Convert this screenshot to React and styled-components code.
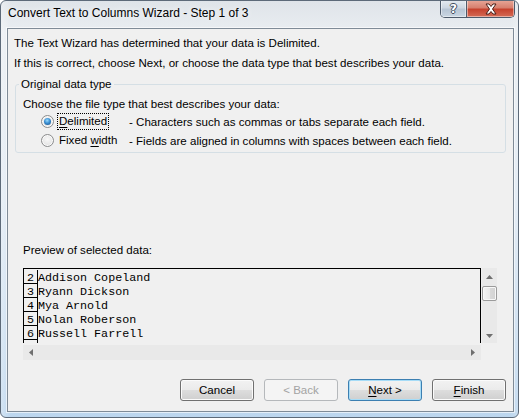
import React from 'react';
import styled, { createGlobalStyle } from 'styled-components';

const Global = createGlobalStyle`
  html, body { margin: 0; padding: 0; background: #fff; }
  body {
    width: 519px; height: 418px; overflow: hidden;
    font-family: "Liberation Sans", Arial, sans-serif;
    font-size: 11.55px; color: #000;
  }
  * { box-sizing: border-box; }
`;

const Window = styled.div`
  width: 519px;
  height: 418px;
  border: 1px solid #5d6a79;
  border-radius: 6px;
  background:
    linear-gradient(to right, rgba(255,255,255,0.35), rgba(255,255,255,0) 10px, rgba(255,255,255,0) 509px, rgba(255,255,255,0.2)),
    linear-gradient(to bottom, #dfe4e9 0px, #e9edf1 30px, #dfe9f3 200px, #bcd6ee 418px);
  display: flex;
  flex-direction: column;
  overflow: hidden;
`;

const TitleBar = styled.div`
  height: 27px;
  display: flex;
  align-items: flex-start;
  flex-shrink: 0;
`;

const Title = styled.div`
  padding-left: 7px;
  line-height: 24px;
  font-size: 12px;
  text-shadow: 0 0 6px rgba(255,255,255,0.9);
`;

const CaptionButtons = styled.div`
  margin-left: auto;
  margin-right: 3px;
  margin-top: -1px;
  display: flex;
  height: 18px;
  border: 1px solid #4d5a6a;
  border-top: none;
  border-radius: 0 0 5px 5px;
  overflow: hidden;
`;

const CaptionButton = styled.div`
  width: ${p => p.$w}px;
  height: 100%;
  display: flex;
  align-items: center;
  justify-content: center;
  background: ${p => p.$close
    ? 'linear-gradient(to bottom, #e8a899 0%, #d7806f 45%, #c6422e 55%, #d46b55 100%)'
    : 'linear-gradient(to bottom, #e5ebf1 0%, #cdd7e2 45%, #b7c5d4 55%, #cad6e2 100%)'};
  box-shadow: inset 0 0 0 1px rgba(255,255,255,0.45);
  & + & { border-left: 1px solid #4d5a6a; }
`;

const HelpGlyph = styled.span`
  font-family: "DejaVu Sans", sans-serif;
  font-weight: bold;
  font-size: 12px;
  line-height: 1;
  margin-top: 1px;
  color: #fff;
  text-shadow: 1px 0 0 #3e4d5e, -1px 0 0 #3e4d5e, 0 1px 0 #3e4d5e, 0 -1px 0 #3e4d5e;
`;

const Client = styled.div`
  flex: 1;
  margin: 0 4px 5px 6px;
  border: 1px solid #7f8b97;
  box-shadow: 0 0 0 1px rgba(255,255,255,0.6);
  background: #f0f0f0;
  display: flex;
  flex-direction: column;
  padding-top: 4px;
`;

const Intro = styled.div`
  padding-left: 6px;
  line-height: 20px;
`;

const Group = styled.fieldset`
  margin: 3px 7px 0 7px;
  padding: 0 0 2px 0;
  border: 1px solid #d5dfe5;
  border-radius: 3px;
  min-width: 0;
`;

const GroupLegend = styled.legend`
  margin-left: 3px;
  padding: 0 2px;
  line-height: 16px;
`;

const GroupBody = styled.div`
  padding-left: 7px;
`;

const Prompt = styled.div`
  margin-top: 4px;
  line-height: 16px;
`;

const OptionRow = styled.div`
  height: 19px;
  display: flex;
  align-items: center;
  padding-left: 18px;
`;

const Radio = styled.span`
  position: relative;
  width: 13px;
  height: 13px;
  border-radius: 50%;
  border: 1px solid #8b8c8d;
  background: radial-gradient(circle at 50% 40%, #f8f8f8 0%, #e8e8e8 55%, #d2d2d2 100%);
  box-shadow: inset 0 0 0 1px #fbfbfb;
  flex-shrink: 0;
  &::after {
    content: '';
    display: ${p => (p.$checked ? 'block' : 'none')};
    position: absolute;
    left: 2px; top: 2px;
    width: 7px; height: 7px;
    border-radius: 50%;
    background: radial-gradient(circle at 45% 35%, #9adcfd 0%, #3b8fd3 45%, #124a82 100%);
  }
`;

const LabelCell = styled.span`
  width: 72px;
  margin-left: 3px;
  flex-shrink: 0;
`;

const LabelText = styled.span`
  display: inline-block;
  padding: 0 1px;
  line-height: 15px;
  border: 1px dotted ${p => (p.$focus ? '#000' : 'transparent')};
`;

const Desc = styled.span``;

const Key = styled.span`
  text-decoration: underline;
  text-underline-offset: 2px;
`;

const PreviewLabel = styled.div`
  margin-top: 89px;
  padding-left: 15px;
  line-height: 16px;
`;

const Preview = styled.div`
  margin: 10px 0 0 15px;
  display: grid;
  grid-template-columns: 458px 15px;
  grid-template-rows: 75px 15px;
  column-gap: 1px;
  row-gap: 2px;
  width: 474px;
`;

const DataList = styled.div`
  border: 1px solid #000;
  border-bottom: none;
  padding-top: 1px;
  overflow: hidden;
  font-family: "Liberation Mono", "Courier New", monospace;
  font-size: 11.7px;
`;

const DataRow = styled.div`
  display: flex;
  height: 14px;
`;

const NumCell = styled.div`
  width: 14px;
  height: 14px;
  border-right: 1px solid #000;
  border-bottom: 1px solid #000;
  text-align: center;
  line-height: 17px;
  flex-shrink: 0;
`;

const TextCell = styled.div`
  line-height: 17px;
  white-space: pre;
`;

const ScrollBar = styled.div`
  background: #e9e9e9;
  display: flex;
  flex-direction: ${p => (p.$vertical ? 'column' : 'row')};
  align-items: center;
  justify-content: space-between;
  padding: ${p => (p.$vertical ? '7px 0 5px' : '0 6px')};
`;

const Thumb = styled.div`
  width: 15px;
  height: 15px;
  margin-top: 7px;
  margin-bottom: auto;
  border: 1px solid #9b9b9b;
  border-radius: 2px;
  background: linear-gradient(to right, #f4f4f4 0%, #e9e9e9 50%, #d9d9d9 51%, #d2d2d2 100%);
  box-shadow: inset 0 0 0 1px #f8f8f8;
`;

const Arrow = styled.svg`
  display: block;
  flex-shrink: 0;
`;

const Corner = styled.div``;

const ButtonRow = styled.div`
  margin-top: 19px;
  padding-right: 7px;
  display: flex;
  justify-content: flex-end;
  gap: 10px;
`;

const Button = styled.button`
  width: 74px;
  height: 22px;
  padding: 0;
  font-family: "Liberation Sans", Arial, sans-serif;
  font-size: 11.55px;
  color: ${p => (p.disabled ? '#a3a3a3' : '#000')};
  border-radius: 3px;
  border: 1px solid ${p => (p.disabled ? '#b5b8bb' : p.$default ? '#3c7fb1' : '#707070')};
  background: ${p => p.disabled
    ? '#f4f4f4'
    : 'linear-gradient(to bottom, #f2f2f2 0%, #ebebeb 48%, #dddddd 52%, #cfcfcf 100%)'};
  box-shadow: inset 0 0 0 1px ${p => (p.$default ? '#a6dcf7' : p.disabled ? '#f4f4f4' : '#fbfbfb')};
  cursor: default;
`;

const rows = [
  ['2', 'Addison Copeland'],
  ['3', 'Ryann Dickson'],
  ['4', 'Mya Arnold'],
  ['5', 'Nolan Roberson'],
  ['6', 'Russell Farrell'],
  ['', ''],
];

const Tri = ({ dir }) => {
  const pts = {
    up: '0,4 3.5,0 7,4',
    down: '0,0 3.5,4 7,0',
    left: '4,0 0,3.5 4,7',
    right: '0,0 4,3.5 0,7',
  }[dir];
  const vert = dir === 'up' || dir === 'down';
  return (
    <Arrow width={vert ? 7 : 4} height={vert ? 4 : 7} viewBox={vert ? '0 0 7 4' : '0 0 4 7'}>
      <polygon points={pts} fill="#6f6f6f" />
    </Arrow>
  );
};

export default function App() {
  return (
    <>
      <Global />
      <Window>
        <TitleBar>
          <Title>Convert Text to Columns Wizard - Step 1 of 3</Title>
          <CaptionButtons>
            <CaptionButton $w={25}><HelpGlyph>?</HelpGlyph></CaptionButton>
            <CaptionButton $w={48} $close>
              <svg width="14" height="12" viewBox="0 0 14 12">
                <path d="M2 1 L5 1 L7 3.5 L9 1 L12 1 L8.5 6 L12 11 L9 11 L7 8.5 L5 11 L2 11 L5.5 6 Z"
                  fill="#fff" stroke="#4a1f18" strokeWidth="1" strokeLinejoin="round" />
              </svg>
            </CaptionButton>
          </CaptionButtons>
        </TitleBar>
        <Client>
          <Intro>The Text Wizard has determined that your data is Delimited.</Intro>
          <Intro>If this is correct, choose Next, or choose the data type that best describes your data.</Intro>
          <Group>
            <GroupLegend>Original data type</GroupLegend>
            <GroupBody>
              <Prompt>Choose the file type that best describes your data:</Prompt>
              <OptionRow>
                <Radio $checked />
                <LabelCell><LabelText $focus><Key>D</Key>elimited</LabelText></LabelCell>
                <Desc>- Characters such as commas or tabs separate each field.</Desc>
              </OptionRow>
              <OptionRow>
                <Radio />
                <LabelCell><LabelText>Fixed <Key>w</Key>idth</LabelText></LabelCell>
                <Desc>- Fields are aligned in columns with spaces between each field.</Desc>
              </OptionRow>
            </GroupBody>
          </Group>
          <PreviewLabel>Preview of selected data:</PreviewLabel>
          <Preview>
            <DataList>
              {rows.map(([n, t], i) => (
                <DataRow key={i}>
                  <NumCell>{n}</NumCell>
                  <TextCell>{t}</TextCell>
                </DataRow>
              ))}
            </DataList>
            <ScrollBar $vertical>
              <Tri dir="up" />
              <Thumb />
              <Tri dir="down" />
            </ScrollBar>
            <ScrollBar>
              <Tri dir="left" />
              <Tri dir="right" />
            </ScrollBar>
            <Corner />
          </Preview>
          <ButtonRow>
            <Button>Cancel</Button>
            <Button disabled>&lt; Back</Button>
            <Button $default><Key>N</Key>ext &gt;</Button>
            <Button><Key>F</Key>inish</Button>
          </ButtonRow>
        </Client>
      </Window>
    </>
  );
}
